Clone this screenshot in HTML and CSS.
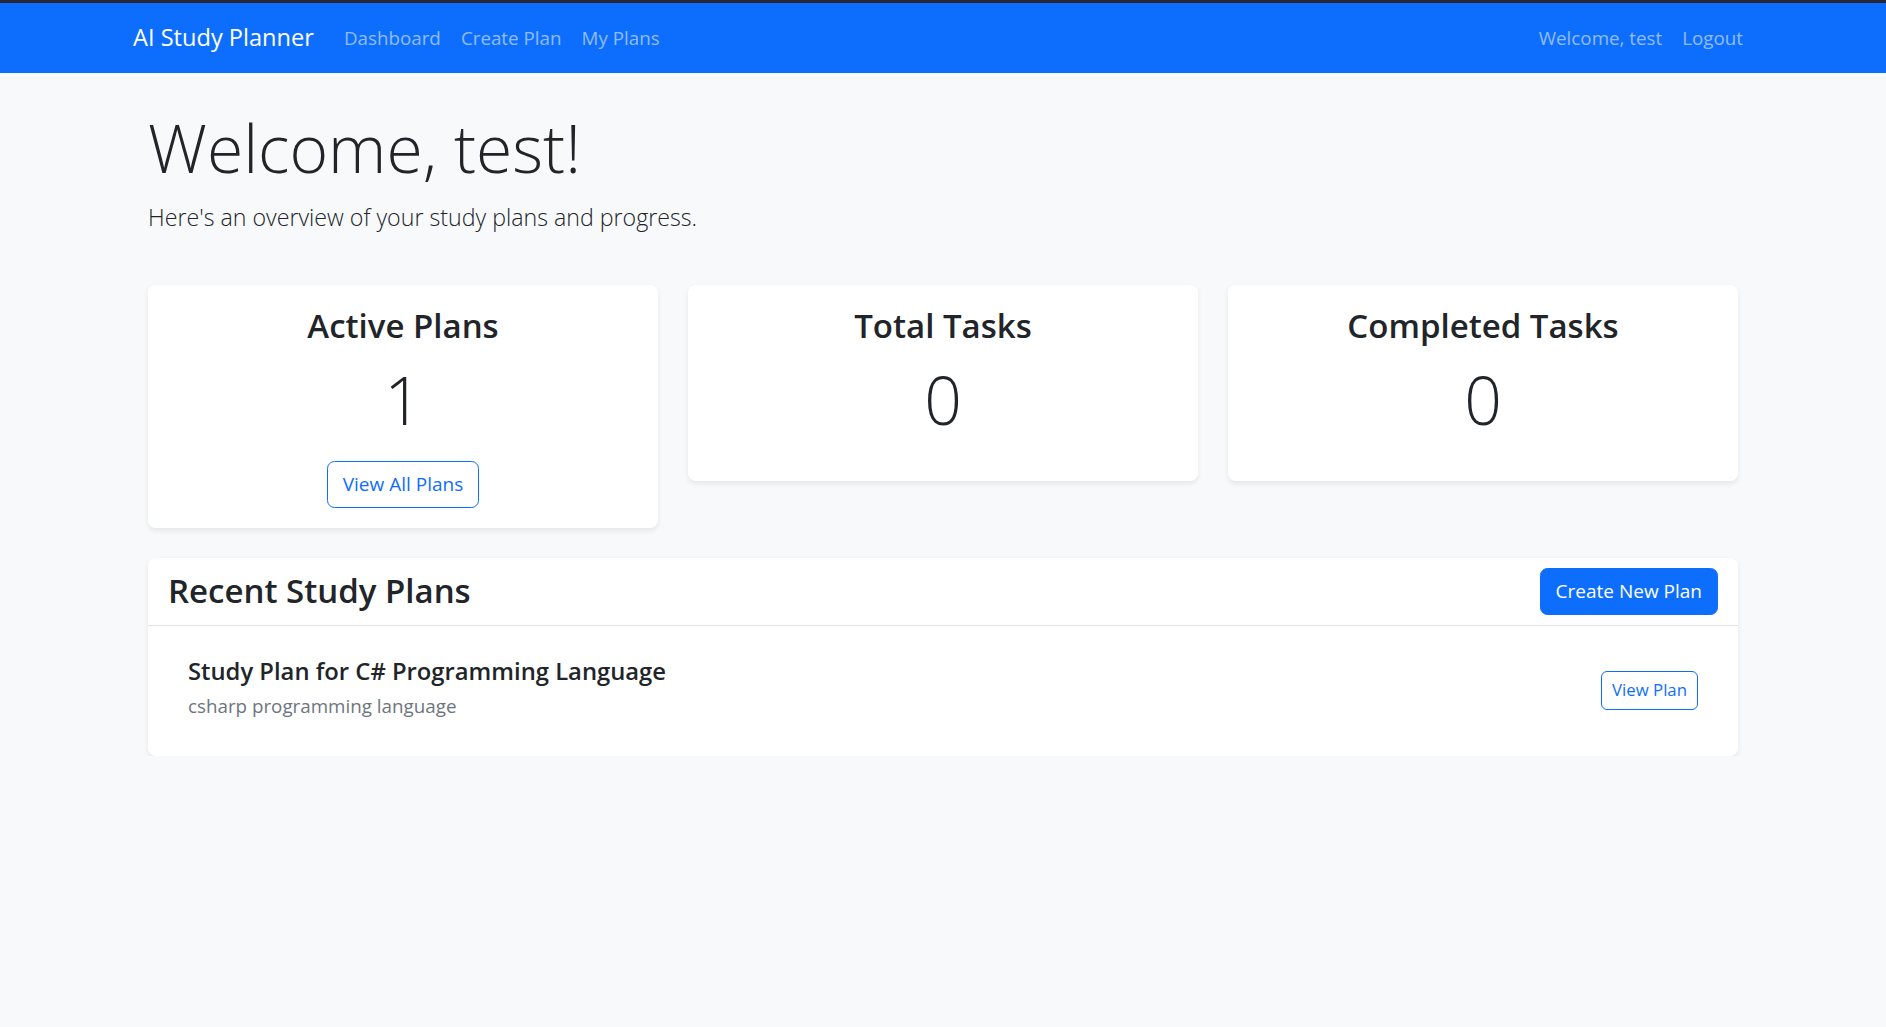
FILE: index.html
```html
<!DOCTYPE html>
<html lang="en">
<head>
<meta charset="utf-8">
<title>AI Study Planner</title>
<link rel="stylesheet" href="styles.css">
</head>
<body>
<nav class="navbar">
  <div class="nav-container">
    <div class="nav-left">
      <a class="brand" href="#">AI Study Planner</a>
      <a class="nav-link" href="#">Dashboard</a>
      <a class="nav-link" href="#">Create Plan</a>
      <a class="nav-link" href="#">My Plans</a>
    </div>
    <div class="nav-right">
      <span class="nav-link">Welcome, test</span>
      <a class="nav-link" href="#">Logout</a>
    </div>
  </div>
</nav>
<main class="main">
  <div class="intro">
    <h1 class="display">Welcome, test!</h1>
    <p class="lead">Here's an overview of your study plans and progress.</p>
  </div>
  <div class="stats">
    <div class="card stat">
      <h3 class="stat-title">Active Plans</h3>
      <p class="display stat-num">1</p>
      <a class="btn btn-outline" href="#">View All Plans</a>
    </div>
    <div class="card stat">
      <h3 class="stat-title">Total Tasks</h3>
      <p class="display stat-num">0</p>
    </div>
    <div class="card stat">
      <h3 class="stat-title">Completed Tasks</h3>
      <p class="display stat-num">0</p>
    </div>
  </div>
  <div class="card recent">
    <div class="card-header">
      <h3 class="header-title">Recent Study Plans</h3>
      <a class="btn btn-primary" href="#">Create New Plan</a>
    </div>
    <div class="card-body">
      <div class="plan-item">
        <div class="plan-text">
          <h5 class="plan-title">Study Plan for C# Programming Language</h5>
          <p class="plan-desc">csharp programming language</p>
        </div>
        <a class="btn btn-outline btn-sm" href="#">View Plan</a>
      </div>
    </div>
  </div>
</main>
</body>
</html>
```
FILE: styles.css
```css
* { box-sizing: border-box; }
html, body { margin: 0; padding: 0; }
body {
  background: #f8f9fa;
  color: #212529;
  font-family: "Open Sans", "Noto Sans", sans-serif;
  font-size: 19px;
  line-height: 30px;
  border-top: 3px solid #2a2838;
}
a { text-decoration: none; }
.navbar {
  background: #0d6efd;
  padding: 10px 0;
}
.nav-container {
  width: 1650px;
  margin: 0 auto;
  padding: 0 15px;
  display: flex;
  justify-content: space-between;
  align-items: center;
}
.nav-left, .nav-right { display: flex; align-items: center; }
.brand {
  color: #fff;
  font-size: 23.6px;
  line-height: 37.5px;
  padding: 6.25px 0;
  margin-right: 20px;
}
.nav-link {
  color: rgba(255,255,255,0.55);
  font-size: 18.8px;
  line-height: 30px;
  padding: 10px 10px;
}
.main {
  width: 1590px;
  margin: 32px auto 0;
}
h1, h3, h5, p { margin: 0; }
.intro { padding-bottom: 48px; }
.display {
  font-size: 66px;
  font-weight: 300;
  line-height: 84px;
}
h1.display { margin-bottom: 10px; }
.lead {
  font-size: 23.2px;
  font-weight: 300;
  line-height: 37.5px;
}
.stats {
  display: flex;
  gap: 30px;
  align-items: flex-start;
  margin-bottom: 30px;
}
.card {
  background: #fff;
  border-radius: 7.5px;
  box-shadow: 0 2.5px 5px rgba(0,0,0,0.075);
}
.stat {
  flex: 1;
  padding: 20px;
  text-align: center;
}
.stat-title {
  font-size: 33px;
  font-weight: 600;
  line-height: 42px;
  margin-bottom: 10px;
}
.stat-num { margin-bottom: 20px; }
.btn {
  display: inline-block;
  font-size: 19px;
  line-height: 30px;
  padding: 7.5px 15px;
  border: 1.25px solid #0d6efd;
  border-radius: 7.5px;
}
.btn-outline { color: #0d6efd; background: #fff; }
.btn-primary { color: #fff; background: #0d6efd; }
.btn-sm {
  font-size: 16.8px;
  line-height: 26.25px;
  padding: 5px 10px;
  border-radius: 6px;
}
.card-header {
  display: flex;
  justify-content: space-between;
  align-items: center;
  padding: 10px 20px;
  border-bottom: 1.25px solid #e1e2e3;
}
.header-title {
  font-size: 33px;
  font-weight: 600;
  line-height: 42px;
}
.card-body { padding: 20px; }
.plan-item {
  display: flex;
  justify-content: space-between;
  align-items: center;
  padding: 10px 20px;
}
.plan-title {
  font-size: 23.8px;
  font-weight: 600;
  line-height: 30px;
  margin-bottom: 5px;
}
.plan-desc {
  margin-bottom: 5px;
  color: #6c757d;
  font-size: 18.8px;
}
```
